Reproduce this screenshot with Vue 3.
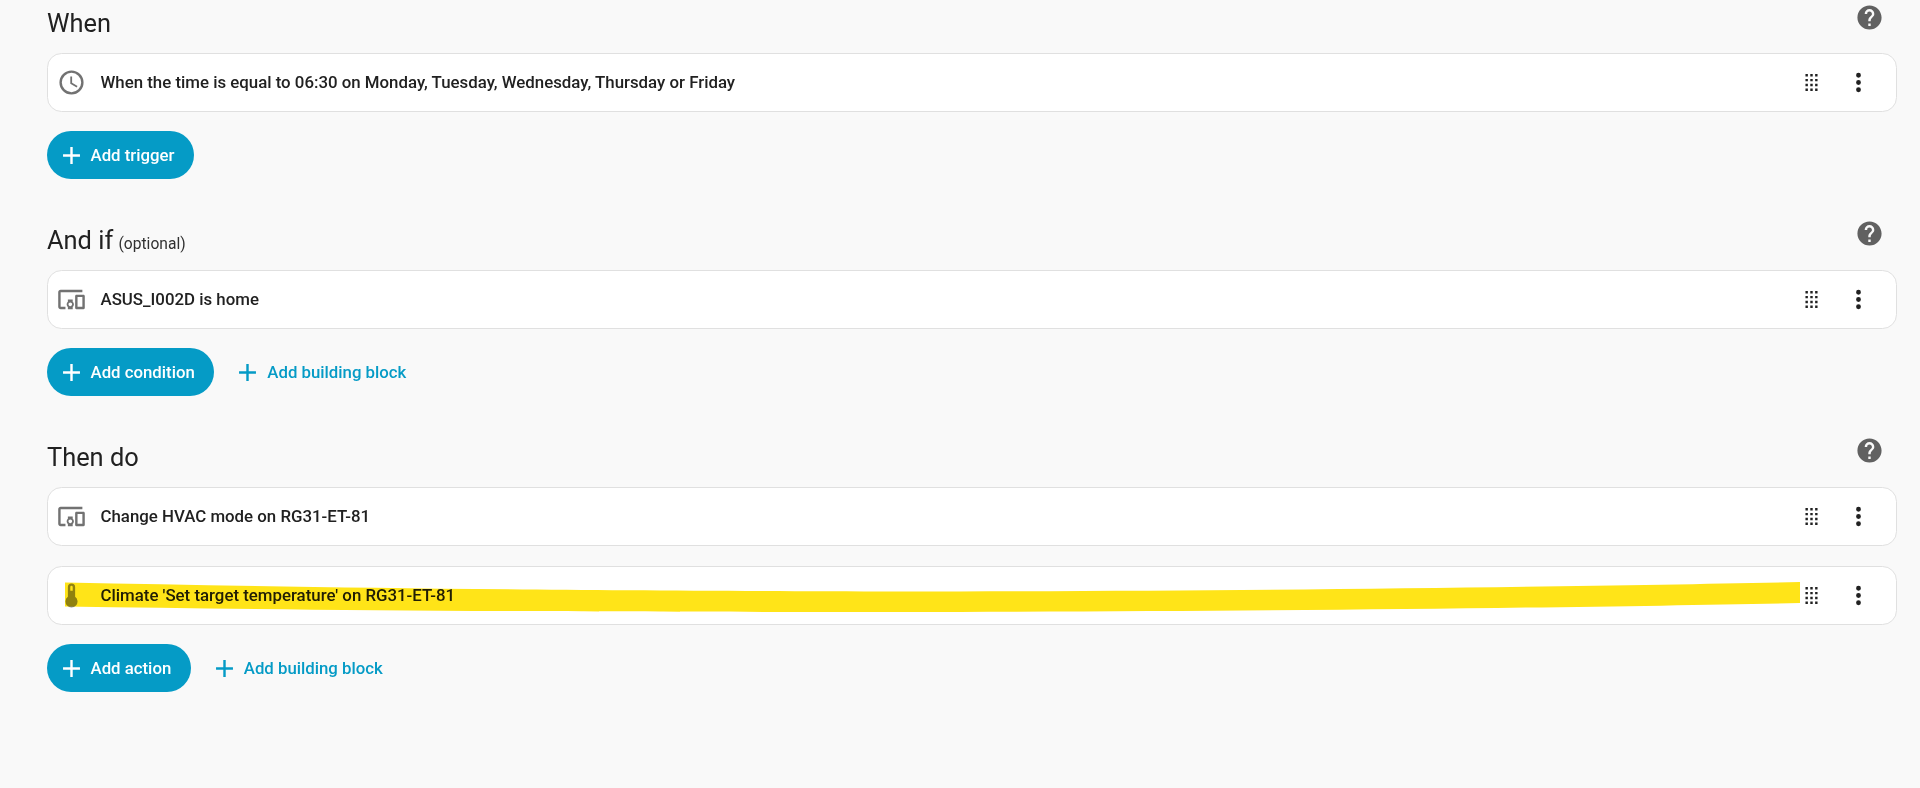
<template>
  <div class="page">
    <section v-for="block in blocks" :key="block.title" class="block">
      <div class="block-head">
        <h2>{{ block.title }} <span v-if="block.note" class="note">{{ block.note }}</span></h2>
        <svg class="icon help" viewBox="0 0 24 24"><path :d="icons.help" /></svg>
      </div>

      <div class="rows">
        <div v-for="row in block.rows" :key="row.text" class="row">
          <svg class="icon lead" :class="row.icon" viewBox="0 0 24 24"><path :d="icons[row.icon]" /></svg>
          <span class="row-text">{{ row.text }}</span>
          <svg class="icon drag" viewBox="0 0 24 24"><path :d="icons.drag" /></svg>
          <svg class="icon more" viewBox="0 0 24 24"><path :d="icons.dots" /></svg>
        </div>
      </div>

      <div class="actions">
        <button class="btn filled">
          <svg class="icon" viewBox="0 0 24 24"><path :d="icons.plus" /></svg>
          {{ block.add }}
        </button>
        <button v-if="block.extra" class="btn text">
          <svg class="icon" viewBox="0 0 24 24"><path :d="icons.plus" /></svg>
          Add building block
        </button>
      </div>
    </section>

    <svg class="marker" viewBox="0 0 1920 788" width="1920" height="788">
      <path d="M65 582.5 C300 587 500 590.5 900 591.5 C1300 591 1600 586 1800 582 L1800 603 C1600 607 1300 611.5 900 612 C500 612 300 610 65 606.5 Z" />
    </svg>
  </div>
</template>

<script setup>
const icons = {
  help: 'M15.07,11.25L14.17,12.17C13.45,12.89 13,13.5 13,15H11V14.5C11,13.39 11.45,12.39 12.17,11.67L13.41,10.41C13.78,10.05 14,9.55 14,9C14,7.89 13.1,7 12,7A2,2 0 0,0 10,9H8A4,4 0 0,1 12,5A4,4 0 0,1 16,9C16,9.88 15.64,10.67 15.07,11.25M13,19H11V17H13M12,2A10,10 0 0,0 2,12A10,10 0 0,0 12,22A10,10 0 0,0 22,12C22,6.47 17.5,2 12,2Z',
  clock: 'M12,20A8,8 0 0,0 20,12A8,8 0 0,0 12,4A8,8 0 0,0 4,12A8,8 0 0,0 12,20M12,2A10,10 0 0,1 22,12A10,10 0 0,1 12,22C6.47,22 2,17.5 2,12A10,10 0 0,1 12,2M12.5,7V12.25L17,14.92L16.25,16.15L11,13V7H12.5Z',
  devices: 'M3 6H21V4H3C1.9 4 1 4.9 1 6V18C1 19.1 1.9 20 3 20H7V18H3V6M13 12H9V13.78C8.39 14.33 8 15.11 8 16C8 16.89 8.39 17.67 9 18.22V20H13V18.22C13.61 17.67 14 16.88 14 16S13.61 14.33 13 13.78V12M11 17.5C10.17 17.5 9.5 16.83 9.5 16S10.17 14.5 11 14.5 12.5 15.17 12.5 16 11.83 17.5 11 17.5M22 8H16C15.5 8 15 8.5 15 9V19C15 19.5 15.5 20 16 20H22C22.5 20 23 19.5 23 19V9C23 8.5 22.5 8 22 8M21 18H17V10H21V18Z',
  thermometer: 'M15 13V5A3 3 0 0 0 9 5V13A5 5 0 1 0 15 13M12 4A1 1 0 0 1 13 5V8H11V5A1 1 0 0 1 12 4Z',
  drag: 'M7,19V17H9V19H7M11,19V17H13V19H11M15,19V17H17V19H15M7,15V13H9V15H7M11,15V13H13V15H11M15,15V13H17V15H15M7,11V9H9V11H7M11,11V9H13V11H11M15,11V9H17V11H15M7,7V5H9V7H7M11,7V5H13V7H11M15,7V5H17V7H15Z',
  dots: 'M12,16A2,2 0 0,1 14,18A2,2 0 0,1 12,20A2,2 0 0,1 10,18A2,2 0 0,1 12,16M12,10A2,2 0 0,1 14,12A2,2 0 0,1 12,14A2,2 0 0,1 10,12A2,2 0 0,1 12,10M12,4A2,2 0 0,1 14,6A2,2 0 0,1 12,8A2,2 0 0,1 10,6A2,2 0 0,1 12,4Z',
  plus: 'M19,13H13V19H11V13H5V11H11V5H13V11H19V13Z'
}

const blocks = [
  {
    title: 'When',
    add: 'Add trigger',
    rows: [
      { icon: 'clock', text: 'When the time is equal to 06:30 on Monday, Tuesday, Wednesday, Thursday or Friday' }
    ]
  },
  {
    title: 'And if',
    note: '(optional)',
    add: 'Add condition',
    extra: true,
    rows: [{ icon: 'devices', text: 'ASUS_I002D is home' }]
  },
  {
    title: 'Then do',
    add: 'Add action',
    extra: true,
    rows: [
      { icon: 'devices', text: 'Change HVAC mode on RG31-ET-81' },
      { icon: 'thermometer', text: "Climate 'Set target temperature' on RG31-ET-81" }
    ]
  }
]
</script>

<style>
html,
body {
  background: #f9f9f9;
  overflow: hidden;
}
</style>

<style scoped>
.page {
  position: relative;
  height: 788px;
  padding: 0 23px 0 47px;
  box-sizing: border-box;
  font-family: Roboto, sans-serif;
  color: #212121;
}

.block {
  margin-bottom: 37.6px;
}

.block-head {
  display: flex;
  justify-content: space-between;
  align-items: flex-start;
  height: 53px;
}

.block-head h2 {
  margin: 0;
  font-size: 25.4px;
  font-weight: 400;
  line-height: 46px;
}

.note {
  margin-left: -1px;
  font-size: 15.6px;
  color: #303030;
}

.icon {
  width: 29px;
  height: 29px;
  flex: none;
  fill: currentColor;
}

.help {
  margin: 2.5px 13px 0 0;
  color: #616161;
}

.rows {
  display: flex;
  flex-direction: column;
  gap: 20px;
}

.row {
  display: flex;
  align-items: center;
  height: 59px;
  box-sizing: border-box;
  padding: 0 23px 0 9px;
  background: #fff;
  border: 1px solid #e0e0e0;
  border-radius: 14.5px;
}

.lead {
  color: #727272;
}

.lead.thermometer {
  color: #909090;
}

.row-text {
  flex: 1;
  margin: 0 0 1px 14.5px;
  font-size: 16.83px;
  font-weight: 500;
}

.drag {
  color: #212121;
}

.more {
  margin-left: 18.5px;
  color: #212121;
}

.actions {
  display: flex;
  align-items: center;
  gap: 19px;
  margin-top: 19.4px;
}

.btn {
  display: flex;
  align-items: center;
  gap: 5px;
  height: 48px;
  border: none;
  background: none;
  font-family: inherit;
  font-size: 16.8px;
  font-weight: 500;
}

.btn.filled {
  padding: 0 19.5px 0 9.5px;
  border-radius: 24px;
  background: #059bc6;
  color: #fff;
}

.btn.text {
  padding: 0 9.5px 0 0;
  color: #059bc6;
}

.marker {
  position: absolute;
  top: 0;
  left: 0;
  pointer-events: none;
  mix-blend-mode: multiply;
}

.marker path {
  fill: #ffe418;
}
</style>
